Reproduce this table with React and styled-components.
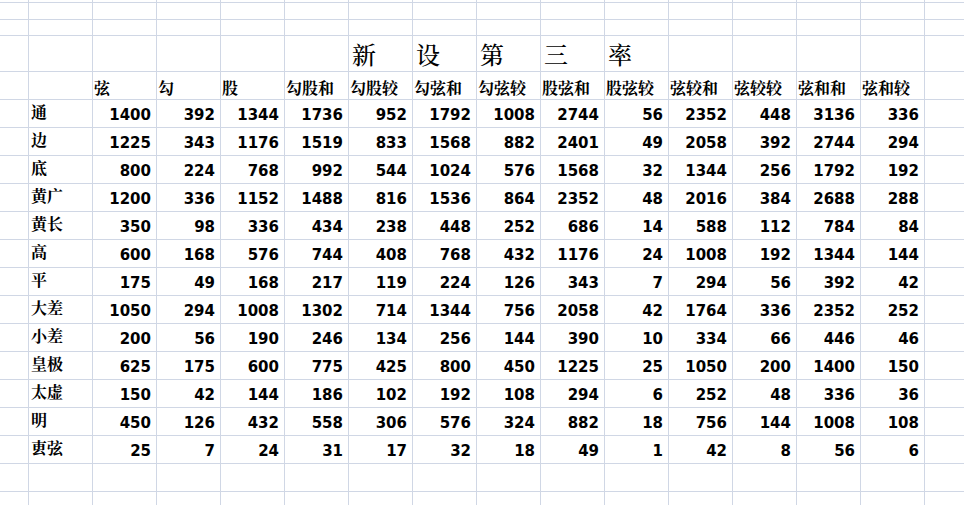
import React from "react";
import styled, { createGlobalStyle } from "styled-components";

const Global = createGlobalStyle`
  html, body { margin: 0; padding: 0; background: #ffffff; overflow: hidden; }
  body { width: 964px; height: 505px; }
`;

const GRID = "#d0d7e5";
const SERIF = `"Noto Serif CJK SC", "Noto Sans CJK SC", serif`;
const NUM = `"DejaVu Sans", "Liberation Sans", sans-serif`;

const Sheet = styled.div`
  display: grid;
  width: 964px;
  height: 519px;
  background: ${GRID};
  gap: 1px;
  grid-template-columns: 28px repeat(14, 63px) 1fr;
  grid-template-rows: 2px 16px 15px 35px 27px repeat(15, 27px);
`;

const Cell = styled.div`
  background: #ffffff;
  display: flex;
  align-items: center;
  overflow: hidden;
  white-space: nowrap;
  color: #000000;
`;

const TitleCell = styled(Cell)`
  font-family: ${SERIF};
  font-size: 24px;
  line-height: 1;
  font-weight: 500;
  padding-left: 3px;
  padding-top: 1px;
`;

const HeaderCell = styled(Cell)`
  font-family: ${SERIF};
  font-size: 16px;
  line-height: 1;
  font-weight: 700;
  padding-left: 1px;
  padding-top: 5px;
`;

const LabelCell = styled(Cell)`
  font-family: ${SERIF};
  font-size: 16px;
  line-height: 1;
  font-weight: 700;
  padding-left: 2px;
  padding-bottom: 4px;
`;

const NumCell = styled(Cell)`
  font-family: ${NUM};
  font-size: 15px;
  line-height: 16px;
  font-weight: 700;
  justify-content: flex-end;
  padding-right: 5px;
  padding-top: 2px;
`;

const COLS = 16;

const headers = ["弦", "勾", "股", "勾股和", "勾股较", "勾弦和", "勾弦较", "股弦和", "股弦较", "弦较和", "弦较较", "弦和和", "弦和较"];

const title = ["新", "设", "第", "三", "率"];

const rows = [
  ["通", 1400, 392, 1344, 1736, 952, 1792, 1008, 2744, 56, 2352, 448, 3136, 336],
  ["边", 1225, 343, 1176, 1519, 833, 1568, 882, 2401, 49, 2058, 392, 2744, 294],
  ["底", 800, 224, 768, 992, 544, 1024, 576, 1568, 32, 1344, 256, 1792, 192],
  ["黄广", 1200, 336, 1152, 1488, 816, 1536, 864, 2352, 48, 2016, 384, 2688, 288],
  ["黄长", 350, 98, 336, 434, 238, 448, 252, 686, 14, 588, 112, 784, 84],
  ["高", 600, 168, 576, 744, 408, 768, 432, 1176, 24, 1008, 192, 1344, 144],
  ["平", 175, 49, 168, 217, 119, 224, 126, 343, 7, 294, 56, 392, 42],
  ["大差", 1050, 294, 1008, 1302, 714, 1344, 756, 2058, 42, 1764, 336, 2352, 252],
  ["小差", 200, 56, 190, 246, 134, 256, 144, 390, 10, 334, 66, 446, 46],
  ["皇极", 625, 175, 600, 775, 425, 800, 450, 1225, 25, 1050, 200, 1400, 150],
  ["太虚", 150, 42, 144, 186, 102, 192, 108, 294, 6, 252, 48, 336, 36],
  ["明", 450, 126, 432, 558, 306, 576, 324, 882, 18, 756, 144, 1008, 108],
  ["叀弦", 25, 7, 24, 31, 17, 32, 18, 49, 1, 42, 8, 56, 6],
];

function emptyRow(key) {
  return Array.from({ length: COLS }, (_, i) => <Cell key={`${key}-${i}`} />);
}

export default function App() {
  const cells = [];
  cells.push(...emptyRow("r0"));
  cells.push(...emptyRow("r1"));
  cells.push(...emptyRow("r2"));
  // title row: one char per cell, from the 勾股较 column
  for (let i = 0; i < COLS; i++) {
    const t = i >= 6 && i < 11 ? title[i - 6] : null;
    cells.push(t ? <TitleCell key={`t-${i}`}>{t}</TitleCell> : <Cell key={`t-${i}`} />);
  }
  for (let i = 0; i < COLS; i++) {
    const h = i >= 2 && i < 15 ? headers[i - 2] : null;
    cells.push(h ? <HeaderCell key={`h-${i}`}>{h}</HeaderCell> : <Cell key={`h-${i}`} />);
  }
  rows.forEach((r, ri) => {
    cells.push(<Cell key={`d${ri}-0`} />);
    cells.push(<LabelCell key={`d${ri}-1`}>{r[0]}</LabelCell>);
    r.slice(1).forEach((v, vi) => {
      cells.push(<NumCell key={`d${ri}-${vi + 2}`}>{v}</NumCell>);
    });
    cells.push(<Cell key={`d${ri}-15`} />);
  });
  cells.push(...emptyRow("e1"));
  cells.push(...emptyRow("e2"));

  return (
    <>
      <Global />
      <Sheet>{cells}</Sheet>
    </>
  );
}
